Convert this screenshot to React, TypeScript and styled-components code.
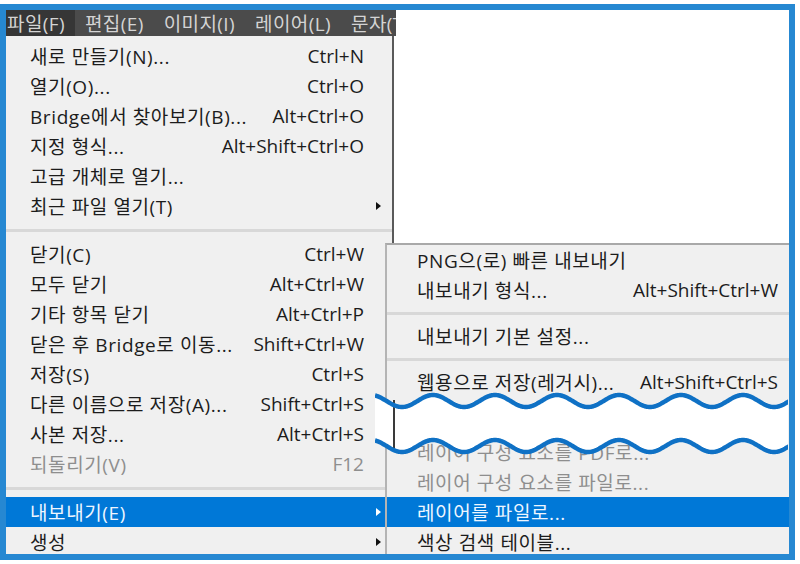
import styled, { createGlobalStyle } from "styled-components";

type MenuItem = {
    label?: string;
    shortcut?: string;
    sub?: boolean;
    active?: boolean;
    disabled?: boolean;
    sep?: number;
    gap?: number;
};

const fileMenu: MenuItem[] = [
    { label: "새로 만들기(N)...", shortcut: "Ctrl+N" },
    { label: "열기(O)...", shortcut: "Ctrl+O" },
    { label: "Bridge에서 찾아보기(B)...", shortcut: "Alt+Ctrl+O" },
    { label: "지정 형식...", shortcut: "Alt+Shift+Ctrl+O" },
    { label: "고급 개체로 열기..." },
    { label: "최근 파일 열기(T)", sub: true },
    { sep: 18 },
    { label: "닫기(C)", shortcut: "Ctrl+W" },
    { label: "모두 닫기", shortcut: "Alt+Ctrl+W" },
    { label: "기타 항목 닫기", shortcut: "Alt+Ctrl+P" },
    { label: "닫은 후 Bridge로 이동...", shortcut: "Shift+Ctrl+W" },
    { label: "저장(S)", shortcut: "Ctrl+S" },
    { label: "다른 이름으로 저장(A)...", shortcut: "Shift+Ctrl+S" },
    { label: "사본 저장...", shortcut: "Alt+Ctrl+S" },
    { label: "되돌리기(V)", shortcut: "F12", disabled: true },
    { sep: 18 },
    { label: "내보내기(E)", sub: true, active: true },
    { label: "생성", sub: true },
];

const exportMenu: MenuItem[] = [
    { label: "PNG으(로) 빠른 내보내기" },
    { label: "내보내기 형식...", shortcut: "Alt+Shift+Ctrl+W" },
    { sep: 16 },
    { label: "내보내기 기본 설정..." },
    { sep: 16 },
    { label: "웹용으로 저장(레거시)...", shortcut: "Alt+Shift+Ctrl+S" },
    { gap: 40 },
    { label: "레이어 구성 요소를 PDF로...", disabled: true },
    { label: "레이어 구성 요소를 파일로...", disabled: true },
    { label: "레이어를 파일로...", active: true },
    { label: "색상 검색 테이블..." },
];

const menuBar = ["파일(F)", "편집(E)", "이미지(I)", "레이어(L)", "문자(T)"];

const GlobalStyle = createGlobalStyle`
    html, body {
        margin: 0;
        background: #ffffff;
    }
    body {
        font-family: "Open Sans", "Noto Sans CJK KR", sans-serif;
        font-size: 19px;
    }
`;

const Frame = styled.div`
    box-sizing: border-box;
    width: 795px;
    height: 556px;
    margin-top: 4px;
    border: 6px solid #2688d2;
    background: #ffffff;
    position: relative;
    overflow: hidden;
`;

const LeftColumn = styled.div`
    display: flex;
    flex-direction: column;
    width: 390px;
    height: 100%;
`;

const Bar = styled.div`
    display: flex;
    align-items: center;
    height: 26px;
    background: #4b4b4b;
    overflow-x: clip;
    overflow-y: visible;
    white-space: nowrap;
`;

const BarItem = styled.div<{ $open?: boolean }>`
    display: flex;
    align-items: center;
    height: 26px;
    padding: 0 10px;
    font-size: 19px;
    letter-spacing: 0.4px;
    color: #d4d4d4;
    background: ${p => p.$open ? "#363636" : "transparent"};

    &:first-child {
        margin-left: -9px;
    }
`;

const Dropdown = styled.div`
    box-sizing: border-box;
    width: 388px;
    flex: 1;
    padding-top: 5px;
    background: #f0f0f0;
    border-right: 2px solid #5a5a5a;
`;

const Submenu = styled.div`
    position: absolute;
    left: 379px;
    top: 233px;
    right: 0;
    bottom: 0;
    background: #f0f0f0;
    border-top: 2px solid #a9a9a9;
    border-left: 2px solid #b4b4b4;
`;

const Row = styled.div<{ $active?: boolean; $disabled?: boolean; $pad: number; $arrowCol: number }>`
    display: grid;
    grid-template-columns: 1fr auto ${p => p.$arrowCol}px;
    align-items: center;
    height: 30px;
    padding-left: ${p => p.$pad}px;
    white-space: nowrap;
    color: ${p => p.$active ? "#eef6ff" : p.$disabled ? "#8e8e8e" : "#1c1c1c"};
    background: ${p => p.$active ? "#0078d7" : "transparent"};
`;

const Label = styled.span`
    letter-spacing: 0.6px;
`;

const Arrow = styled.span<{ $light?: boolean }>`
    justify-self: start;
    margin-left: 12px;
    width: 0;
    height: 0;
    border-top: 4.5px solid transparent;
    border-bottom: 4.5px solid transparent;
    border-left: 5px solid ${p => p.$light ? "#ffffff" : "#111111"};
`;

const Separator = styled.div<{ $h: number }>`
    display: flex;
    align-items: center;
    height: ${p => p.$h}px;

    &::before {
        content: "";
        flex: 1;
        height: 3px;
        background: #d8d8d8;
    }
`;

const Spacer = styled.div<{ $h: number }>`
    height: ${p => p.$h}px;
`;

const Tear = styled.svg`
    position: absolute;
    left: 369px;
    top: 375px;
    width: 413px;
    height: 80px;
`;

function MenuList(props: { items: MenuItem[]; pad: number; arrowCol: number }) {
    return (
        <>
            {props.items.map((item, i) => {
                if (item.sep) return <Separator key={i} $h={item.sep} />;
                if (item.gap) return <Spacer key={i} $h={item.gap} />;
                return (
                    <Row key={i} $active={item.active} $disabled={item.disabled} $pad={props.pad} $arrowCol={props.arrowCol}>
                        <Label>{item.label}</Label>
                        <span>{item.shortcut}</span>
                        {item.sub ? <Arrow $light={item.active} /> : <span />}
                    </Row>
                );
            })}
        </>
    );
}

// page coordinates; the svg viewBox starts at (375, 385)
function wave(centerY: number, fromX: number, toX: number) {
    const pts: string[] = [];
    for (let x = fromX; x <= toX; x += 1) {
        const y = centerY - 6 * Math.cos((2 * Math.PI * (x - 433)) / 62);
        pts.push(`${x},${y.toFixed(2)}`);
    }
    return pts;
}

export default function App() {
    const top = wave(401, 375, 790);
    const bottom = wave(446, 375, 790);
    const fill = `M${top.join(" L")} L${bottom.slice().reverse().join(" L")} Z`;

    return (
        <>
            <GlobalStyle />
            <Frame>
                <LeftColumn>
                    <Bar>
                        {menuBar.map((name, i) => (
                            <BarItem key={name} $open={i === 0}>{name}</BarItem>
                        ))}
                    </Bar>
                    <Dropdown>
                        <MenuList items={fileMenu} pad={24} arrowCol={28} />
                    </Dropdown>
                </LeftColumn>
                <Submenu>
                    <MenuList items={exportMenu} pad={30} arrowCol={11} />
                </Submenu>
                <Tear viewBox="375 385 413 80">
                    <path d={fill} fill="#ffffff" />
                    <rect x="393" y="400" width="2" height="48" fill="#3a3a3a" />
                    <path d={`M${top.join(" L")}`} fill="none" stroke="#0f71c5" strokeWidth="4.5" />
                    <path d={`M${bottom.join(" L")}`} fill="none" stroke="#0f71c5" strokeWidth="4.5" />
                </Tear>
            </Frame>
        </>
    );
}
